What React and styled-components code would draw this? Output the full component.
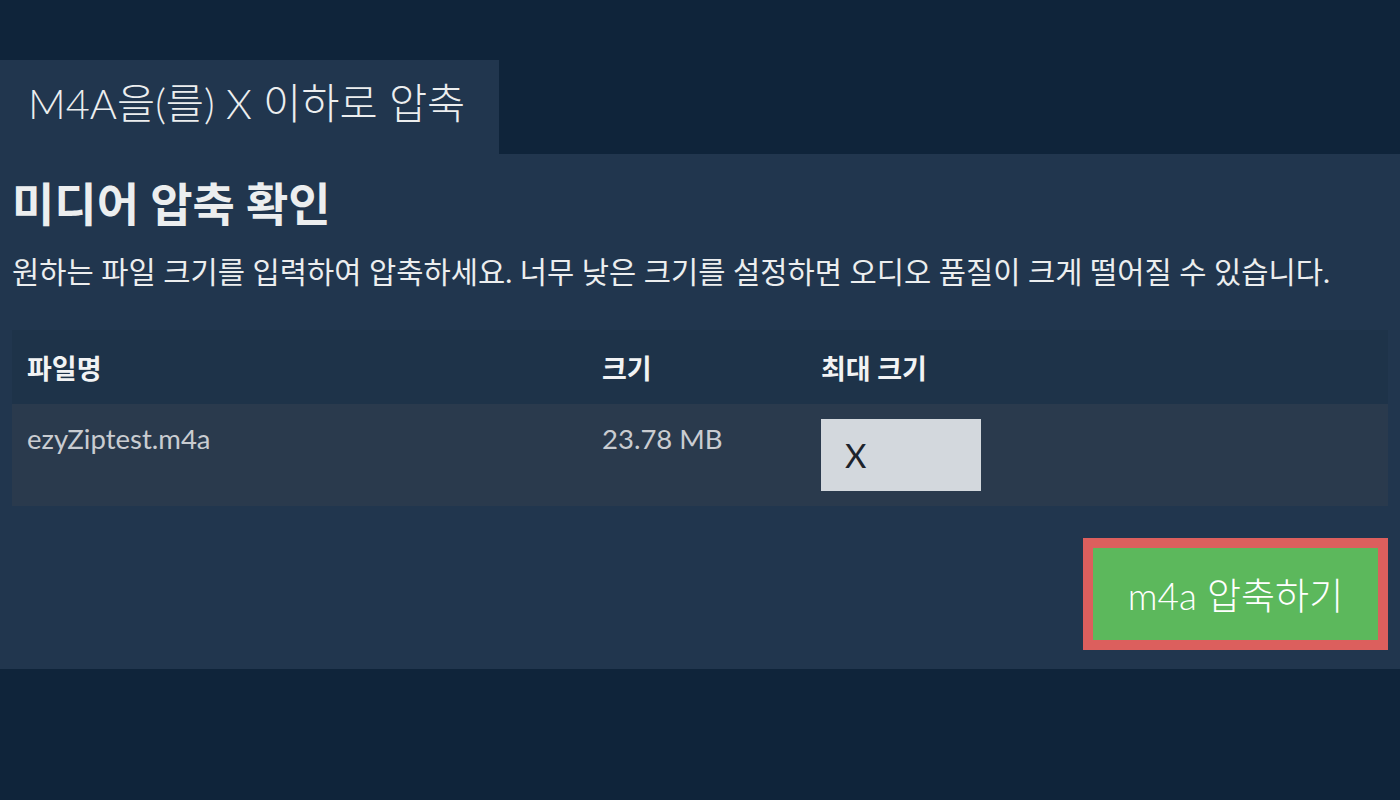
import React from 'react'
import styled, { createGlobalStyle } from 'styled-components'

const GlobalStyle = createGlobalStyle`
  html, body {
    margin: 0;
    padding: 0;
    background: #0f243a;
    font-family: Lato, "Noto Sans CJK KR", sans-serif;
  }
`

function App() {
  return (
    <>
      <GlobalStyle />
      <Page>
        <Tab>M4A을(를) X 이하로 압축</Tab>
        <Panel>
          <Headline>미디어 압축 확인</Headline>
          <Description>
            원하는 파일 크기를 입력하여 압축하세요. 너무 낮은 크기를 설정하면 오디오 품질이 크게 떨어질 수 있습니다.
          </Description>

          <Table>
            <HeadRow>
              <HeadCell>파일명</HeadCell>
              <HeadCell>크기</HeadCell>
              <HeadCell>최대 크기</HeadCell>
            </HeadRow>
            <BodyRow>
              <Cell>ezyZiptest.m4a</Cell>
              <Cell>23.78 MB</Cell>
              <InputCell>
                <SizeInput defaultValue="X" />
              </InputCell>
            </BodyRow>
          </Table>

          <Footer>
            <CompressButton>m4a 압축하기</CompressButton>
          </Footer>
        </Panel>
      </Page>
    </>
  )
}

export default App


const Page = styled.div`
    padding-top: 60px;
    min-height: 800px;
    box-sizing: border-box;
`

const Tab = styled.div`
    display: inline-flex;
    align-items: center;
    width: 499px;
    height: 94px;
    box-sizing: border-box;
    padding: 0 0 12px 28px;
    background: #21364e;
    color: #eceeef;
    font-size: 41.5px;
    font-weight: 300;
    vertical-align: top;
`

const Panel = styled.div`
    background: #21364e;
    padding: 22px 12px 19px 12px;
`

const Headline = styled.h1`
    margin: 0;
    font-size: 46px;
    font-weight: 700;
    color: #eceeef;
    line-height: 56px;
`

const Description = styled.p`
    margin: 20px 0 0 0;
    font-size: 29.6px;
    color: #eceeef;
    line-height: 40px;
    white-space: nowrap;
`

const Table = styled.div`
    margin-top: 38px;
    width: 1376px;
`

const HeadRow = styled.div`
    display: grid;
    grid-template-columns: 575px 219px 1fr;
    height: 74px;
    align-items: center;
    background: #1e3349;
`

const HeadCell = styled.div`
    padding-left: 15px;
    font-size: 27px;
    font-weight: 700;
    color: #f2f3f4;
`

const BodyRow = styled.div`
    display: grid;
    grid-template-columns: 575px 219px 1fr;
    height: 102px;
    align-items: start;
    background: #2a3a4d;
`

const Cell = styled.div`
    padding: 20px 0 0 15px;
    font-size: 27.5px;
    color: #c9ccd1;
    line-height: 30px;
`

const InputCell = styled.div`
    padding: 15px 0 0 15px;
`

const SizeInput = styled.input`
    display: block;
    width: 160px;
    height: 72px;
    box-sizing: border-box;
    border: none;
    outline: none;
    background: #d3d8dd;
    padding: 0 0 0 24px;
    font-family: Lato, "Noto Sans CJK KR", sans-serif;
    font-size: 33px;
    color: #1d232b;
`

const Footer = styled.div`
    display: flex;
    justify-content: flex-end;
    margin-top: 32px;
    width: 1376px;
`

const CompressButton = styled.button`
    width: 305px;
    height: 112px;
    box-sizing: border-box;
    border: 10px solid #dc5f5d;
    background: #5cb85c;
    color: #ffffff;
    font-family: Lato, "Noto Sans CJK KR", sans-serif;
    font-size: 37px;
    font-weight: 300;
    cursor: pointer;
`
